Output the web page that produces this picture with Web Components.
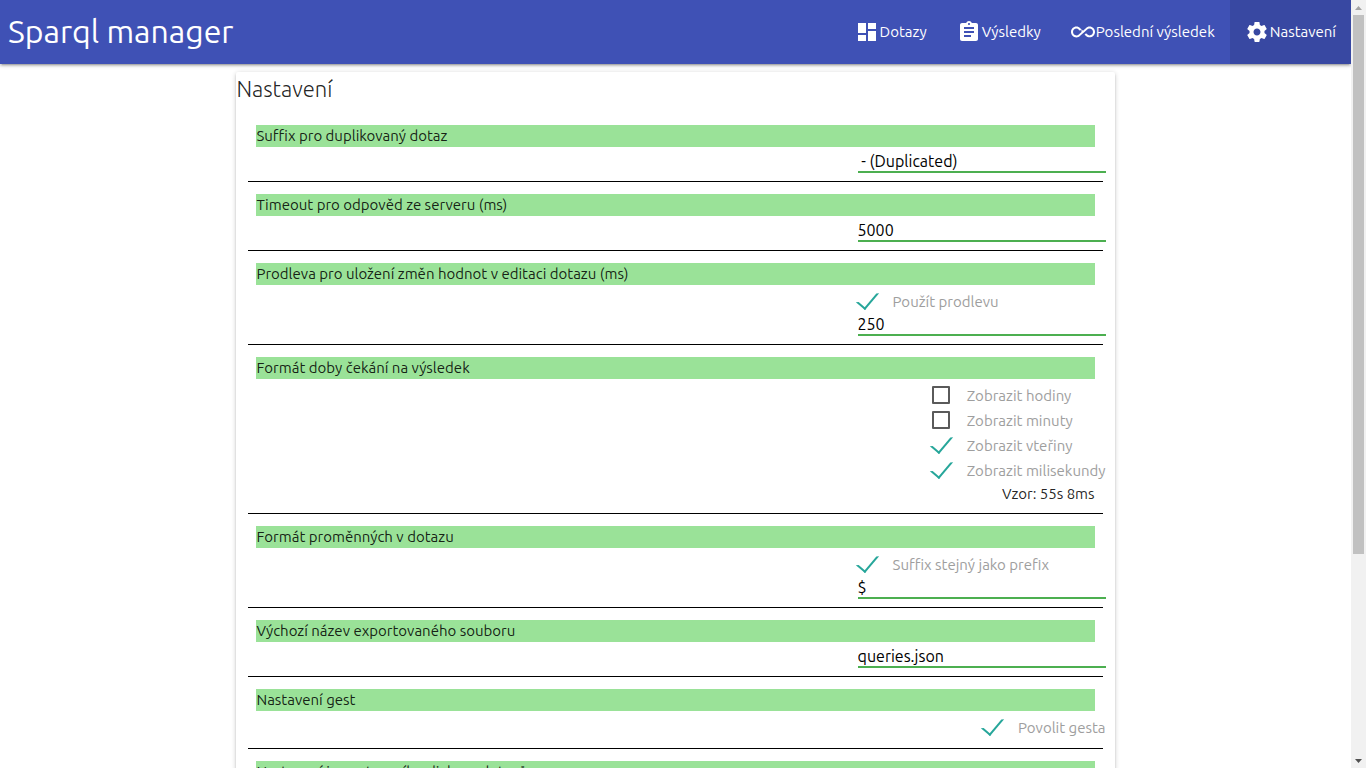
<!DOCTYPE html>
<html lang="cs">
<head>
<meta charset="utf-8">
<meta name="viewport" content="width=device-width, initial-scale=1">
<title>Sparql manager</title>
<style>
  html, body { height: 100%; }
  body { margin: 0; background: #fff; color: rgba(0, 0, 0, .87); font: 15px/22px Ubuntu, "Noto Sans", sans-serif; overflow: hidden; }
</style>
</head>
<body>
<app-shell>
  <app-nav slot="nav" brand="Sparql manager">
    <nav-item icon="dashboard">Dotazy</nav-item>
    <nav-item icon="assignment">Výsledky</nav-item>
    <nav-item icon="infinity">Poslední výsledek</nav-item>
    <nav-item icon="settings" active>Nastavení</nav-item>
  </app-nav>
  <settings-card heading="Nastavení">
    <setting-row heading="Suffix pro duplikovaný dotaz">
      <text-field value=" - (Duplicated)" label="Suffix pro duplikovaný dotaz"></text-field>
    </setting-row>
    <setting-row heading="Timeout pro odpověd ze serveru (ms)">
      <text-field value="5000" label="Timeout pro odpověd ze serveru (ms)"></text-field>
    </setting-row>
    <setting-row heading="Prodleva pro uložení změn hodnot v editaci dotazu (ms)">
      <check-field checked>Použít prodlevu</check-field>
      <text-field value="250" label="Prodleva (ms)"></text-field>
    </setting-row>
    <setting-row heading="Formát doby čekání na výsledek">
      <check-field>Zobrazit hodiny</check-field>
      <check-field>Zobrazit minuty</check-field>
      <check-field checked>Zobrazit vteřiny</check-field>
      <check-field checked>Zobrazit milisekundy</check-field>
      <span slot="note">Vzor: 55s 8ms</span>
    </setting-row>
    <setting-row heading="Formát proměnných v dotazu">
      <check-field checked>Suffix stejný jako prefix</check-field>
      <text-field value="$" label="Prefix"></text-field>
    </setting-row>
    <setting-row heading="Výchozí název exportovaného souboru">
      <text-field value="queries.json" label="Výchozí název exportovaného souboru"></text-field>
    </setting-row>
    <setting-row heading="Nastavení gest">
      <check-field checked>Povolit gesta</check-field>
    </setting-row>
    <setting-row heading="Nastavení importovacího dialogu dotazů"></setting-row>
  </settings-card>
</app-shell>

<script>
class BaseElement extends HTMLElement {
  render(html) {
    if (!this.shadowRoot) this.attachShadow({ mode: 'open' });
    this.shadowRoot.innerHTML = html;
  }
  text(name) {
    return (this.getAttribute(name) || '').replace(/&/g, '&amp;').replace(/"/g, '&quot;').replace(/</g, '&lt;');
  }
}

customElements.define('app-shell', class extends BaseElement {
  connectedCallback() {
    this.render(`
      <style>
        :host { display: grid; grid-template-columns: 1fr auto; height: 100vh; }
        .page { overflow-y: auto; scrollbar-width: none; min-width: 0; }
      </style>
      <div class="page"><slot name="nav"></slot><slot></slot></div>
      <page-scrollbar></page-scrollbar>`);
  }
});

customElements.define('page-scrollbar', class extends BaseElement {
  connectedCallback() {
    this.render(`
      <style>
        :host { display: flex; flex-direction: column; width: 15px; background: #f1f1f1; }
        button { display: flex; align-items: center; justify-content: center; height: 15px; padding: 0; border: 0; background: none; }
        svg { display: block; width: 7px; height: 4px; }
        .track { flex: 1; padding: 0 2px; }
        .thumb { height: 73%; background: #c1c1c1; }
      </style>
      <button aria-label="Nahoru"><svg viewBox="0 0 7 4"><path d="M0 4 3.500 0 7 4z" fill="#a3a3a3"/></svg></button>
      <div class="track"><div class="thumb"></div></div>
      <button aria-label="Dolů"><svg viewBox="0 0 7 4"><path d="M0 0h7L3.500 4z" fill="#505050"/></svg></button>`);
    const [up, down] = this.shadowRoot.querySelectorAll('button');
    const page = () => this.getRootNode().querySelector('.page');
    up.onclick = () => page().scrollBy(0, -40);
    down.onclick = () => page().scrollBy(0, 40);
  }
});

customElements.define('app-nav', class extends BaseElement {
  connectedCallback() {
    this.render(`
      <style>
        :host { display: block; position: relative; background: #3f51b5; color: #fff;
          box-shadow: 0 2px 2px 0 rgba(0,0,0,.14), 0 3px 1px -2px rgba(0,0,0,.12), 0 1px 5px 0 rgba(0,0,0,.2); }
        nav { display: flex; justify-content: space-between; height: 64px; padding-left: 8px; line-height: 62px; }
        .brand { color: inherit; text-decoration: none; font-size: 32px; white-space: nowrap; }
        .items { display: flex; line-height: 22px; }
      </style>
      <nav><a class="brand" href="#">${this.text('brand')}</a><div class="items"><slot></slot></div></nav>`);
  }
});

const ICONS = {
  dashboard: 'M3 13h8V3H3v10zm0 8h8v-6H3v6zm10 0h8V11h-8v10zm0-18v6h8V3h-8z',
  assignment: 'M19 3h-4.180C14.400 1.840 13.300 1 12 1c-1.300 0-2.400.84-2.820 2H5c-1.100 0-2 .9-2 2v14c0 1.100.9 2 2 2h14c1.100 0 2-.9 2-2V5c0-1.100-.9-2-2-2zm-7 0c.55 0 1 .45 1 1s-.45 1-1 1-1-.45-1-1 .45-1 1-1zm2 14H7v-2h7v2zm3-4H7v-2h10v2zm0-4H7V7h10v2z',
  infinity: 'M18.6 6.62c-1.440 0-2.800.56-3.770 1.530L12 10.660 9.220 8.200C8.200 7.180 6.840 6.620 5.400 6.620 2.420 6.620 0 9.040 0 12s2.420 5.380 5.400 5.380c1.440 0 2.800-.56 3.770-1.530l2.830-2.510.01.01L13.500 12l2.700-2.390c.64-.64 1.490-.99 2.400-.99 1.870 0 3.400 1.510 3.400 3.380s-1.530 3.380-3.400 3.380c-.9 0-1.760-.35-2.440-1.030l-1.140-1.010-1.510 1.340 1.270 1.120c1.020 1.010 2.370 1.570 3.820 1.570 2.980 0 5.400-2.410 5.400-5.370s-2.420-5.380-5.400-5.380zM7.800 14.390c-.64.64-1.490.99-2.400.99C3.530 15.380 2 13.870 2 12s1.530-3.380 3.400-3.380c.91 0 1.760.35 2.440 1.030l1.130 1 1.510-1.340L10.500 12l-2.700 2.390z',
  settings: 'M19.43 12.98c.04-.32.07-.64.07-.98s-.03-.66-.07-.98l2.110-1.650c.19-.15.24-.42.12-.64l-2-3.460c-.12-.22-.39-.3-.61-.22l-2.490 1c-.52-.4-1.080-.73-1.690-.98l-.38-2.650C14.460 2.180 14.250 2 14 2h-4c-.25 0-.46.18-.49.42l-.38 2.650c-.61.25-1.170.59-1.690.98l-2.490-1c-.23-.09-.49 0-.61.22l-2 3.460c-.13.22-.07.49.12.64l2.110 1.650c-.04.32-.07.65-.07.98s.03.66.07.98l-2.110 1.650c-.19.15-.24.42-.12.64l2 3.460c.12.22.39.3.61.22l2.490-1c.52.4 1.080.73 1.690.98l.38 2.650c.03.24.24.42.49.42h4c.25 0 .46-.18.49-.42l.38-2.650c.61-.25 1.170-.59 1.690-.98l2.490 1c.23.09.49 0 .61-.22l2-3.460c.12-.22.07-.49-.12-.64l-2.110-1.650zM12 15.500c-1.930 0-3.500-1.570-3.500-3.500s1.570-3.500 3.500-3.500 3.500 1.570 3.500 3.500-1.570 3.500-3.500 3.500z'
};

customElements.define('nav-item', class extends BaseElement {
  connectedCallback() {
    this.render(`
      <style>
        :host { display: block; }
        :host([active]) { background: rgba(0, 0, 0, .1); }
        a { display: flex; align-items: center; gap: 1px; height: 64px; padding: 0 15px; color: #fff; text-decoration: none; font-size: 15px; white-space: nowrap; }
        svg { width: 24px; height: 24px; fill: currentColor; }
      </style>
      <a href="#"><svg viewBox="0 0 24 24" aria-hidden="true"><path d="${ICONS[this.getAttribute('icon')]}"/></svg><slot></slot></a>`);
  }
});

customElements.define('settings-card', class extends BaseElement {
  connectedCallback() {
    this.render(`
      <style>
        :host { display: block; width: 65%; margin: 8px auto; border-radius: 2px; background: #fff;
          box-shadow: 0 2px 2px 0 rgba(0,0,0,.14), 0 3px 1px -2px rgba(0,0,0,.12), 0 1px 5px 0 rgba(0,0,0,.2); }
        h1 { margin: 0; font-size: 22px; font-weight: 300; line-height: 34px; }
        .rows { padding: 19px 9px 12px 12px; }
      </style>
      <h1>${this.text('heading')}</h1>
      <div class="rows"><slot></slot></div>`);
  }
});

customElements.define('setting-row', class extends BaseElement {
  connectedCallback() {
    this.render(`
      <style>
        :host { display: block; margin-bottom: 12px; }
        h2 { margin: 0 11px 0 8px; background: #9ae298; font: inherit; }
        .body { display: flex; flex-direction: column; align-items: flex-end; padding: 4px 0 8px; }
        .note { margin-right: 11px; }
        hr { height: 1px; margin: 0 3px 0 0; border: 0; background: #000; }
      </style>
      <h2>${this.text('heading')}</h2>
      <div class="body"><div><slot></slot></div><div class="note"><slot name="note"></slot></div></div>
      <hr>`);
  }
});

customElements.define('text-field', class extends BaseElement {
  connectedCallback() {
    this.render(`
      <style>
        :host { display: block; width: 248px; }
        input { display: block; box-sizing: border-box; width: 100%; height: 22px; padding: 0; border: 0; border-bottom: 2px solid #4caf50;
          outline: 0; background: none; color: #000; font: inherit; font-size: 16px; }
      </style>
      <input type="text" aria-label="${this.text('label')}" value="${this.text('value')}">`);
  }
});

customElements.define('check-field', class extends BaseElement {
  connectedCallback() {
    this.render(`
      <style>
        :host { display: block; }
        label { display: flex; align-items: center; gap: 17px; height: 25px; color: #9e9e9e; white-space: nowrap; }
        input { appearance: none; display: grid; place-items: start; box-sizing: border-box; width: 18px; height: 18px; margin: 0 0 1px;
          border: 2px solid #5a5a5a; border-radius: 1px; }
        input:checked { border-color: transparent; }
        input:checked::before { content: ""; box-sizing: border-box; width: 12px; height: 22px; margin: -6px 0 0 -7px;
          border: 2px solid transparent; border-right-color: #26a69a; border-bottom-color: #26a69a;
          transform: rotate(40deg); transform-origin: 100% 100%; }
      </style>
      <label><input type="checkbox" ${this.hasAttribute('checked') ? 'checked' : ''}><span><slot></slot></span></label>`);
  }
});
</script>
</body>
</html>
